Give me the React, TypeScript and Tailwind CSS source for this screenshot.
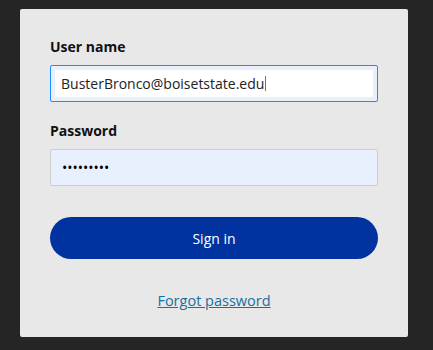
export default function App() {
  return (
    <div
      className="min-h-[350px] bg-[#252525] pt-[9px] pl-[20px]"
      style={{ fontFamily: '"Open Sans", "Liberation Sans", sans-serif' }}
    >
      <div className="w-[388px] h-[328px] bg-[#e8e8e8] rounded-[2px] px-[30px] pt-[28px]">
        <label className="block text-[14px] leading-[20px] font-bold text-[#111]">User name</label>
        <div className="mt-[8px] h-[37px] border border-[#1a8cff] rounded-[2px] bg-[#e8f0fe] p-[4px]">
          <div className="h-full bg-white flex items-center pl-[6px] text-[14px] text-[#222]">
            <span>BusterBronco@boisetstate.edu</span>
            <span className="w-px h-[15px] bg-[#c03cc8] ml-px" />
          </div>
        </div>

        <label className="block mt-[19px] text-[14px] leading-[20px] font-bold text-[#111]">Password</label>
        <input
          type="password"
          readOnly
          value="123456789"
          className="mt-[8px] block w-full h-[37px] border border-[#cdcdcd] rounded-[2px] bg-[#e8f0fe] px-[11px] text-[14px] text-black outline-none"
        />

        <button className="mt-[31px] w-full h-[42px] rounded-full bg-[#0033a0] text-white text-[14px]">
          Sign in
        </button>

        <div className="mt-[29px] text-center">
          <a href="#" className="text-[14.5px] leading-[20px] text-[#1670a0] underline">
            Forgot password
          </a>
        </div>
      </div>
    </div>
  );
}
